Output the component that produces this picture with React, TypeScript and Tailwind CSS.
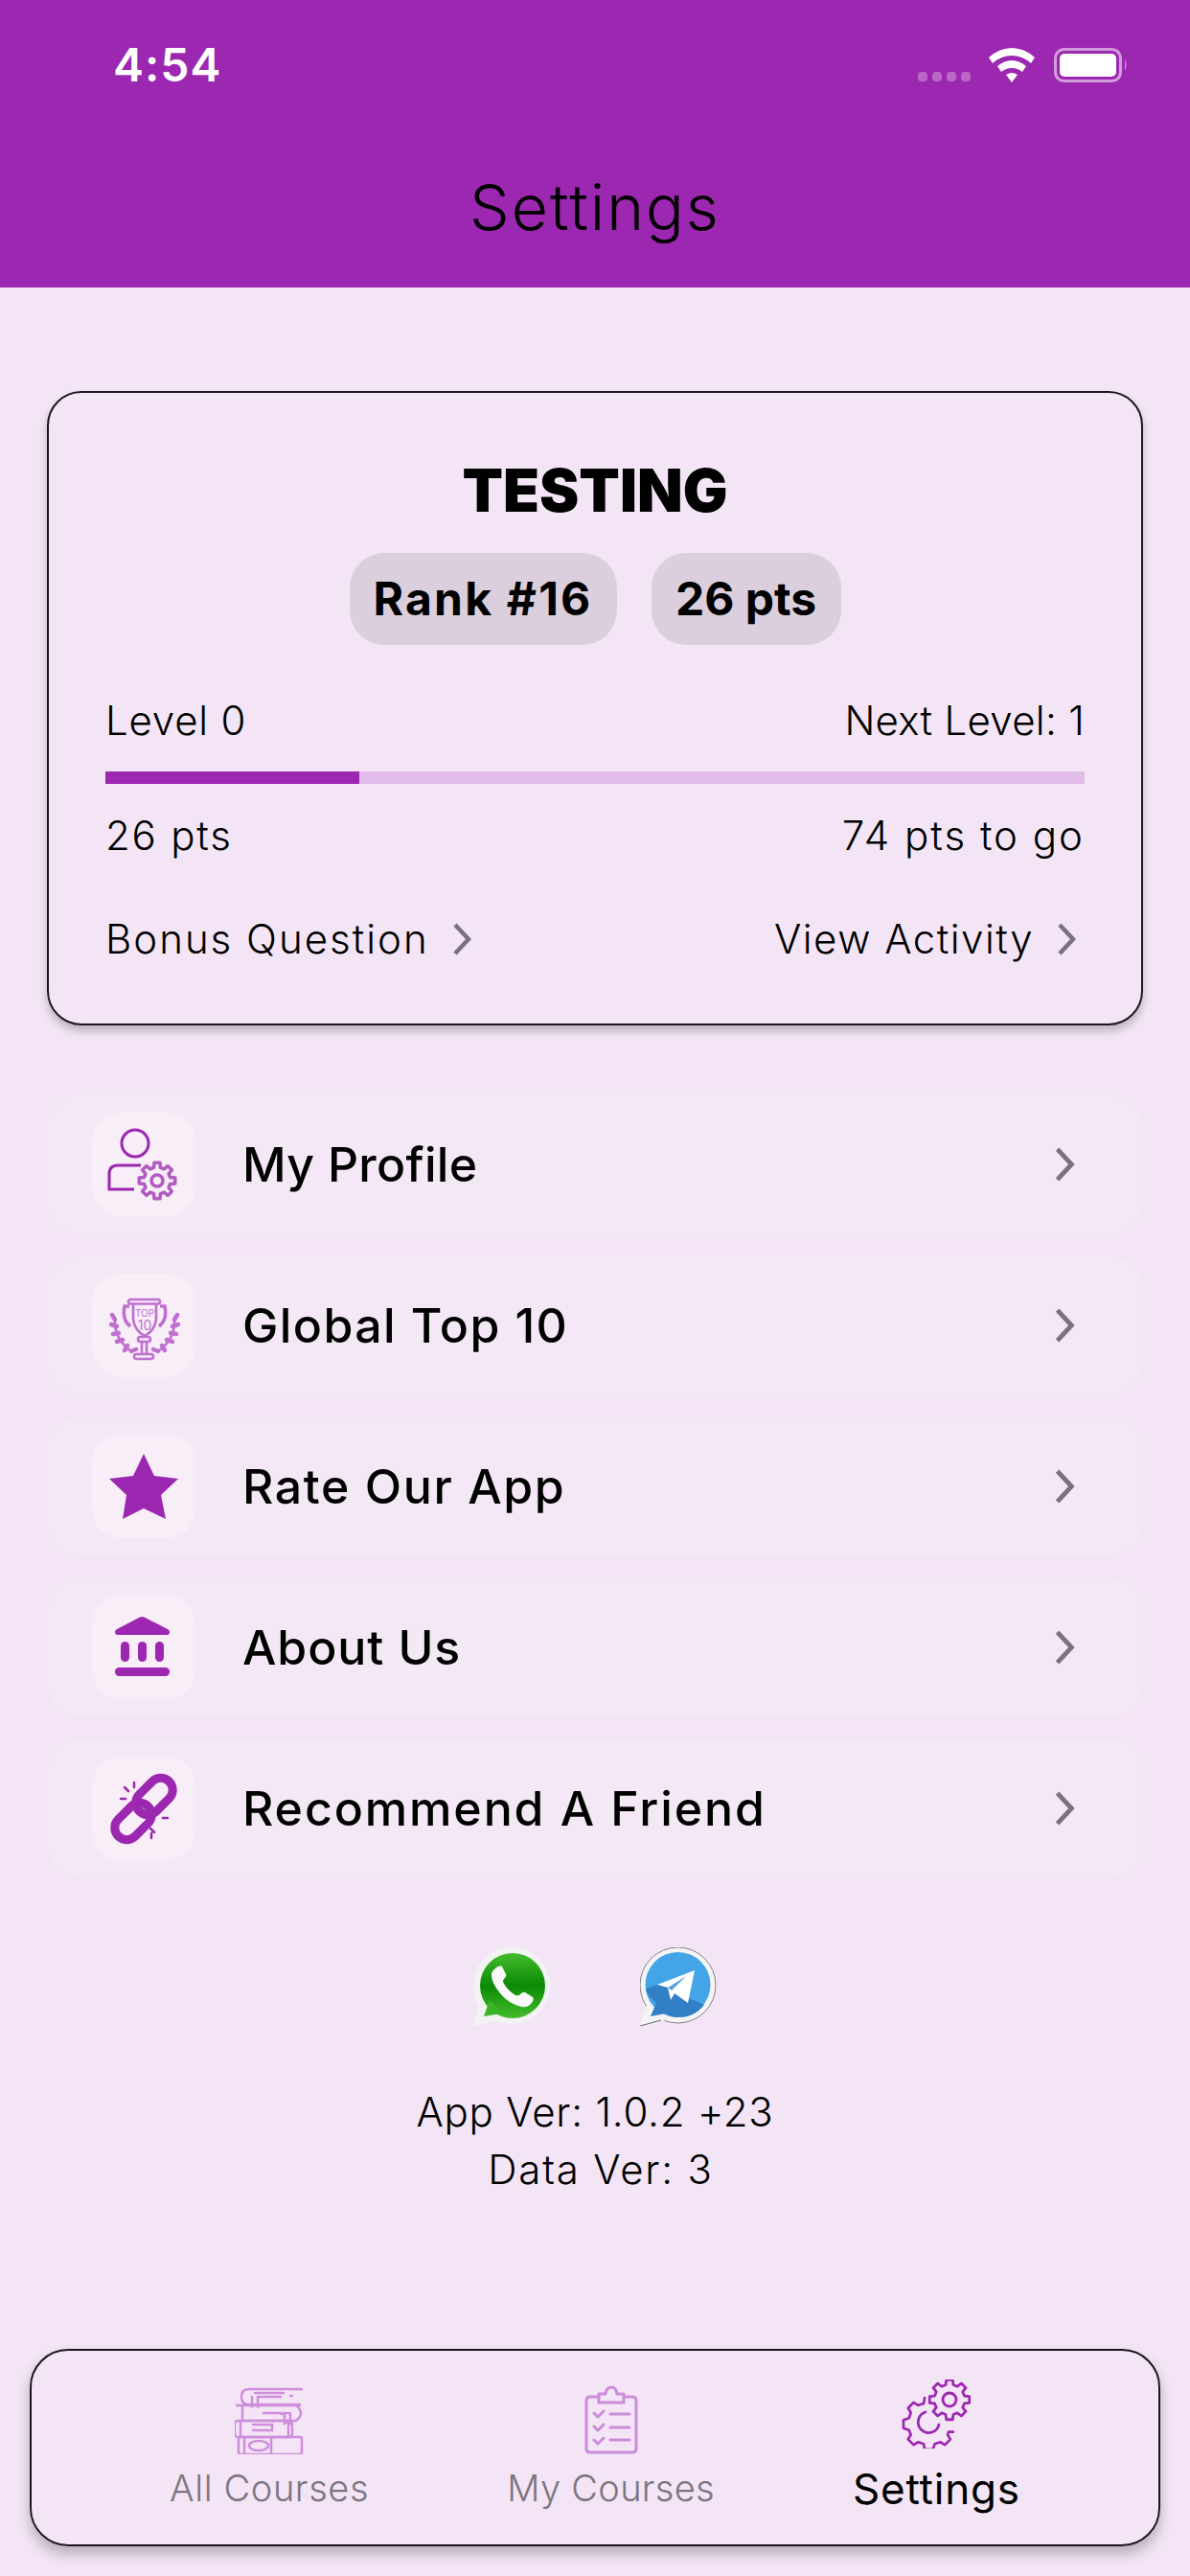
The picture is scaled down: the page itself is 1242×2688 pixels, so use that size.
import React from 'react';

const PURPLE = '#9c27b0';

// builds the outline of a cog, used by the small gear icons
const gearPath = (cx: number, cy: number, outer: number, inner: number, teeth: number) => {
  const step = (Math.PI * 2) / teeth;
  const pts: string[] = [];
  for (let i = 0; i < teeth; i++) {
    const a = i * step;
    const at = (r: number, t: number) =>
      `${(cx + r * Math.cos(a + t * step)).toFixed(2)} ${(cy + r * Math.sin(a + t * step)).toFixed(2)}`;
    pts.push(at(inner, -0.32), at(outer, -0.2), at(outer, 0.2), at(inner, 0.32));
  }
  return `M${pts.join('L')}Z`;
};

const Chevron = ({ className }: { className: string }) => (
  <svg viewBox="0 0 20 34" className={className} fill="none" stroke="#7b6f80" strokeWidth="4.500">
    <path d="M3 2l14 15L3 32" />
  </svg>
);

const UserGearIcon = () => (
  <svg viewBox="0 0 108 108" className="w-[108px] h-[108px]" fill="none" stroke={PURPLE}>
    <circle cx="45" cy="32" r="14" strokeWidth="3" />
    <path d="M51 55H27q-9 0-9 9v16h26" strokeWidth="3" />
    <path d={gearPath(68, 71, 19, 14, 8)} strokeWidth="3.500" strokeLinejoin="round" opacity="0.75" />
    <circle cx="68" cy="71" r="6" strokeWidth="3.500" opacity="0.75" />
  </svg>
);

const TrophyIcon = () => (
  <svg viewBox="0 0 108 108" className="w-[108px] h-[108px]" fill="none" stroke="#c06fd0" strokeWidth="2.600">
    <rect x="38" y="27" width="33" height="4.500" rx="2.200" />
    <path d="M43 32v16q2 12 12 17 10-5 12-17V32" />
    <path d="M39 34h-5q-3 14 6 21M71 34h5q3 14-6 21" strokeWidth="3.500" />
    <text x="55" y="45" textAnchor="middle" fontSize="10" fontFamily="Inter, sans-serif" fill="#c06fd0" stroke="none">TOP</text>
    <text x="55" y="59" textAnchor="middle" fontSize="14" fontFamily="Inter, sans-serif" fill="#c06fd0" stroke="none">10</text>
    <rect x="48" y="66" width="13" height="5" rx="2.500" />
    <path d="M52 71v13M57 71v13" />
    <rect x="44" y="84" width="20" height="5" rx="2.500" />
    <path d="M24 48q-1 20 17 33M86 48q1 20-17 33" />
    <path d="M24 48l-3-5M26 55l-6-2M28 62l-6 1M32 69l-6 2M37 75l-3 5M41 81l5-2M86 48l3-5M84 55l6-2M82 62l6 1M78 69l6 2M73 75l3 5M69 81l-5-2" strokeWidth="4.500" strokeLinecap="round" />
  </svg>
);

const StarIcon = () => (
  <svg viewBox="0 0 108 108" className="w-[108px] h-[108px]" fill={PURPLE}>
    <path d="M54 20l11 23 25 3-18 17 5 25-23-11-22 11 4-25-18-17 25-3z" />
  </svg>
);

const BankIcon = () => (
  <svg viewBox="0 0 108 108" className="w-[108px] h-[108px]" fill={PURPLE}>
    <path d="M50 22.5q2-1 4.500 0L79 35q3 2 1.500 5-.8 1-2.500 1H27q-1.700 0-2.500-1-1.500-3 1.500-5z" />
    <rect x="30" y="48" width="9" height="21" rx="4.500" />
    <rect x="48" y="48" width="9" height="21" rx="4.500" />
    <rect x="66" y="48" width="9" height="21" rx="4.500" />
    <rect x="24" y="75" width="57" height="9" rx="4.500" />
  </svg>
);

const BrokenLinkIcon = () => (
  <svg viewBox="0 0 108 108" className="w-[108px] h-[108px]" fill="none" stroke={PURPLE}>
    <rect x="43" y="29" width="44" height="25" rx="12.500" strokeWidth="9" transform="rotate(-45 65 41.500)" />
    <rect x="21" y="55" width="44" height="25" rx="12.500" strokeWidth="9" transform="rotate(-45 43 67.500)" />
    <path d="M34 32l4 4M44 27v5M30 44h5M74 64h5M61 75l4 4M62 80v5" strokeWidth="2.500" strokeLinecap="round" />
  </svg>
);

const WhatsAppIcon = () => (
  <svg viewBox="0 0 82 82" className="w-[82px] h-[82px]">
    <defs>
      <linearGradient id="wa" x1="0" y1="0" x2="0" y2="1">
        <stop offset="0" stopColor="#45bc2c" />
        <stop offset="0.5" stopColor="#0b8a05" />
        <stop offset="1" stopColor="#45bc2c" />
      </linearGradient>
    </defs>
    <circle cx="41" cy="40" r="40" fill="#f3f3f3" />
    <path d="M0 82l10-30 18 24z" fill="#f3f3f3" />
    <circle cx="42" cy="40" r="34" fill="url(#wa)" />
    <path d="M12 72l6-17 13 14z" fill="#3db327" />
    <path d="M24 22q4-4 7-2l4 8q1 2-2 5-2 2 0 5 5 8 12 12 3 1 5-1 3-3 5-2l8 5q2 3-2 7-4 4-10 3-13-3-22-14-10-12-9-21 1-3 4-5z" fill="#fafafa" />
  </svg>
);

const TelegramIcon = () => (
  <svg viewBox="0 0 82 82" className="w-[82px] h-[82px]">
    <circle cx="39.500" cy="39.500" r="39.500" fill="#f4f4f4" stroke="#666" strokeWidth="0.800" />
    <path d="M0 82l9-28 18 22z" fill="#f4f4f4" />
    <path d="M0 82l22-6" stroke="#666" strokeWidth="1" />
    <circle cx="39.500" cy="39" r="34" fill="#44a4e8" />
    <path d="M6 43l23-7 10 13 19 7 9 4a34 34 0 0 1-27 13q-8 0-13-4l-16 3 6-14q-9-7-11-15z" fill="#337fc6" />
    <path d="M18 39L57 24l-7 34-14-10-4 7-3-13z" fill="#fff" />
    <path d="M29 42l19-12-15 15z" fill="#5ba3dc" />
  </svg>
);

const BooksIcon = () => (
  <svg viewBox="0 0 72 70" className="w-[72px] h-[70px]" fill="none" stroke="#cf8edb" strokeWidth="2.500" strokeLinecap="round">
    <path d="M70 2H15q-8 0-8 8t8 8h53" />
    <path d="M21 6h30M58 9h2M18 10v10l3-2 3 2V10h24" />
    <path d="M2 19h66M64 19q5 4 5 8t-5 8H6" />
    <path d="M8 19v15M48 28h2M56 27H30M52 27v11l3-2 3 2V27" />
    <rect x="0" y="35" width="60" height="17" rx="3" />
    <path d="M6 35v17M19 39h20v6H19M56 35v17" />
    <rect x="4" y="52" width="66" height="18" rx="2" />
    <path d="M10 52v18M38 52v18" />
    <ellipse cx="25" cy="61" rx="10" ry="5" />
  </svg>
);

const ClipboardIcon = () => (
  <svg viewBox="0 0 56 72" className="w-[56px] h-[72px]" fill="none" stroke="#cb8cd8" strokeWidth="3" strokeLinecap="round" strokeLinejoin="round">
    <path d="M15 12H6q-4 0-4 4v50q0 4 4 4h44q4 0 4-4V16q0-4-4-4h-9" />
    <path d="M15 9h7q1-7 6-7t6 7h7v9H15z" />
    <path d="M10 29l4 4 6-6M10 43l4 4 6-6M10 57l4 4 6-6M27 30h20M27 44h20M27 57h20" />
  </svg>
);

const GearsIcon = () => (
  <svg viewBox="0 0 72 72" className="w-[72px] h-[72px]" fill="none" stroke={PURPLE} strokeWidth="2.800" strokeLinejoin="round" strokeLinecap="round">
    <path d={gearPath(50, 21, 21, 16, 8)} />
    <circle cx="50" cy="21" r="7" />
    <path d="M24 21l-1 6-6 2-5-3-6 6 3 5-2 6-6 2v9l6 2 2 5-3 5 6 6 5-3 6 2 1 6h9l2-6 6-2 5 3 6-6-3-5 1-3h5" transform="translate(1 -1) scale(0.96)" />
    <path d="M25 34a11 11 0 1 0 14 13" />
  </svg>
);

const rows = [
  { label: 'My Profile', tracking: 'tracking-[0.3px]', icon: <UserGearIcon /> },
  { label: 'Global Top 10', tracking: 'tracking-[1.4px]', icon: <TrophyIcon /> },
  { label: 'Rate Our App', tracking: 'tracking-[1.6px]', icon: <StarIcon /> },
  { label: 'About Us', tracking: 'tracking-[0.9px]', icon: <BankIcon /> },
  { label: 'Recommend A Friend', tracking: 'tracking-[1.9px]', icon: <BrokenLinkIcon /> },
];

const tabs = [
  { label: 'All Courses', icon: <BooksIcon />, align: 'items-end', text: 'mt-[7px] text-[38px] leading-[56px] tracking-[0.6px] text-[#7d7480] font-light' },
  { label: 'My Courses', icon: <ClipboardIcon />, align: 'items-end', text: 'mt-[7px] text-[38px] leading-[56px] tracking-[0.3px] text-[#7d7480] font-light' },
  { label: 'Settings', icon: <GearsIcon />, align: 'items-start', text: 'mt-[8px] text-[44px] leading-[56px] tracking-[0.8px]' },
];

export default function App() {
  return (
    <div className="w-[1242px] h-[2688px] flex flex-col bg-[#f3e5f5] font-['Inter',sans-serif] text-black overflow-hidden">
      {/* Header with status bar */}
      <header className="h-[300px] bg-[#9c27b0] flex flex-col shrink-0">
        <div className="h-[176px] flex items-start justify-between pl-[118px] pr-[64px] pt-[44px]">
          <span className="text-[48px] leading-[48px] font-semibold tracking-[1px] text-white">4:54</span>
          <div className="flex items-start">
            <div className="flex gap-[5px] mt-[31px] opacity-30">
              <span className="w-[10px] h-[10px] rounded-[4px] bg-white" />
              <span className="w-[10px] h-[10px] rounded-[4px] bg-white" />
              <span className="w-[10px] h-[10px] rounded-[4px] bg-white" />
              <span className="w-[10px] h-[10px] rounded-[4px] bg-white" />
            </div>
            <svg viewBox="0 0 48 36" className="w-[48px] h-[36px] ml-[19px] mt-[6px]" fill="white">
              <path d="M24 0q13 0 24 10l-4 6q-9-8-20-8T4 16l-4-6Q11 0 24 0z" />
              <path d="M24 13q8 0 15 6l-4 6q-5-4-11-4t-11 4l-4-6q7-6 15-6z" />
              <path d="M24 26q3 0 6 2l-6 8-6-8q3-2 6-2z" />
            </svg>
            <svg viewBox="0 0 78 36" className="w-[78px] h-[36px] ml-[20px] mt-[6px]">
              <rect x="1.500" y="1.500" width="68" height="33" rx="9" fill="none" stroke="white" strokeOpacity="0.55" strokeWidth="3" />
              <rect x="6" y="6" width="59" height="24" rx="5" fill="white" />
              <path d="M74 12q3 6 0 12z" fill="white" fillOpacity="0.5" />
            </svg>
          </div>
        </div>
        <h1 className="text-center text-[66px] leading-[80px] font-light tracking-[2px]">Settings</h1>
      </header>

      <main className="flex-1 flex flex-col px-[49px]">
        {/* Score card */}
        <section className="mt-[108px] h-[662px] rounded-[36px] border-2 border-[#1c1520] shadow-[0_6px_10px_rgba(0,0,0,0.22)] px-[59px] pt-[62px] flex flex-col">
          <h2 className="text-center text-[62px] leading-[80px] font-black">TESTING</h2>
          <div className="flex justify-center gap-[36px] mt-[25px]">
            <span className="h-[96px] w-[279px] rounded-[36px] bg-[#dbcfdd] flex items-center justify-center text-[48px] font-bold tracking-[2.2px]">Rank #16</span>
            <span className="h-[96px] w-[198px] rounded-[36px] bg-[#dbcfdd] flex items-center justify-center text-[48px] font-bold">26 pts</span>
          </div>
          <div className="flex justify-between mt-[49px] text-[42px] leading-[60px] font-light">
            <span className="tracking-[0.8px]">Level 0</span>
            <span className="tracking-[0.3px]">Next Level: 1</span>
          </div>
          <div className="h-[13px] mt-[23px] bg-[#e3bde9]">
            <div className="h-full w-[265px] bg-[#9c27b0]" />
          </div>
          <div className="flex justify-between mt-[24px] text-[42px] leading-[60px] font-light">
            <span className="tracking-[1.800px]">26 pts</span>
            <span className="tracking-[2px]">74 pts to go</span>
          </div>
          <div className="flex justify-between mt-[48px] text-[42px] leading-[60px] font-light">
            <span className="flex items-center gap-[24px] tracking-[2px]">Bonus Question <Chevron className="w-[20px] h-[34px]" /></span>
            <span className="flex items-center gap-[24px] mr-[9px] tracking-[1.500px]">View Activity <Chevron className="w-[20px] h-[34px]" /></span>
          </div>
        </section>

        {/* Menu rows */}
        <nav className="mt-[73px] flex flex-col gap-[24px]">
          {rows.map((row) => (
            <div key={row.label} className="h-[144px] rounded-[36px] bg-[#f4e8f6] flex items-center pl-[47px] pr-[71px]">
              <span className="w-[108px] h-[108px] rounded-[30px] bg-[#f7eef8] shrink-0">{row.icon}</span>
              <span className={`ml-[49px] flex-1 text-[50px] font-medium ${row.tracking}`}>{row.label}</span>
              <Chevron className="w-[22px] h-[36px]" />
            </div>
          ))}
        </nav>

        <div className="mt-[73px] flex justify-center gap-[93px]">
          <WhatsAppIcon />
          <TelegramIcon />
        </div>

        <div className="mt-[60px] flex flex-col items-center text-[42px] leading-[60px] font-light">
          <span className="tracking-[0.8px]">App Ver: 1.0.2 +23</span>
          <span className="ml-[12px] tracking-[1.800px]">Data Ver: 3</span>
        </div>
      </main>

      {/* Bottom tabs */}
      <footer className="mx-[31px] mb-[31px] h-[206px] shrink-0 rounded-[40px] border-2 border-[#1c1520] shadow-[0_8px_14px_rgba(0,0,0,0.25)] flex justify-evenly items-start pt-[30px]">
        {tabs.map((tab) => (
          <div key={tab.label} className="flex flex-col items-center">
            <span className={`h-[78px] flex ${tab.align}`}>{tab.icon}</span>
            <span className={tab.text}>{tab.label}</span>
          </div>
        ))}
      </footer>
    </div>
  );
}
